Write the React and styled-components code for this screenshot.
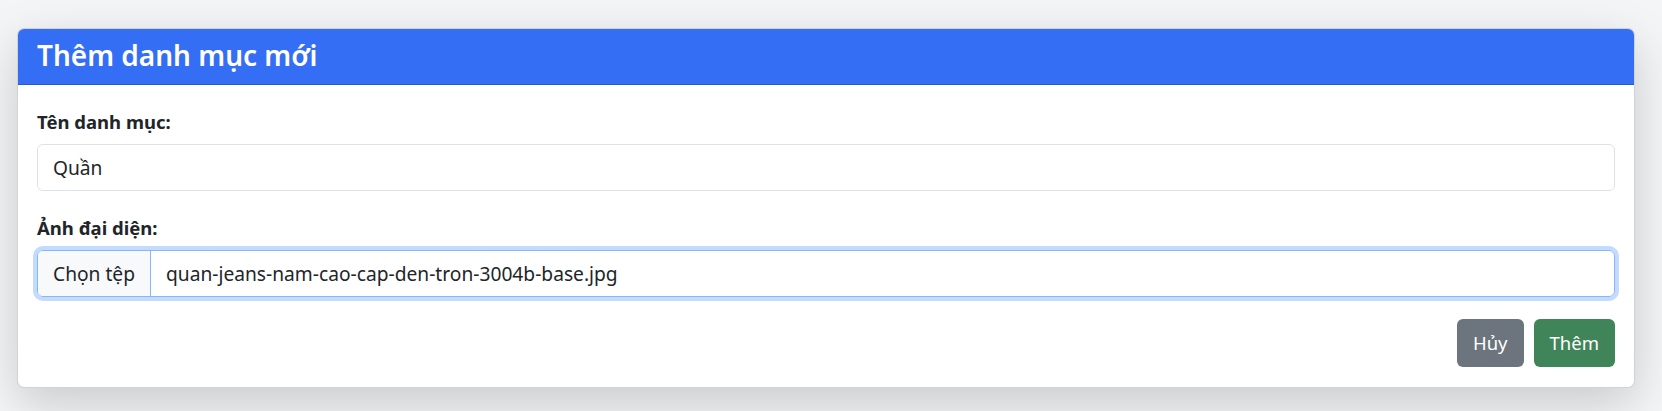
import React from 'react';
import styled, { createGlobalStyle } from 'styled-components';

const GlobalStyle = createGlobalStyle`
    body{
        margin: 0;
        background-color: #f4f5f7;
        font-family: "Noto Sans", "Open Sans", Arial, sans-serif;
        color: #212529;
    }
`

const Page = styled.div`
    padding: 28px 27px 25px 17px;
`

const Card = styled.div`
    background-color: #fff;
    border: 1px solid rgba(0,0,0,.175);
    border-radius: 7px;
    box-shadow: 0 1rem 3rem rgba(0,0,0,.175);
    overflow: hidden;
`

const CardHeader = styled.div`
    background-color: #346ef5;
    color: #fff;
    padding: 10px 19px 11px;
    border-bottom: 1px solid rgba(0,0,0,.175);
    h3{
        margin: 0;
        font-size: 28px;
        font-weight: 600;
        line-height: 1.2;
    }
`

const CardBody = styled.div`
    padding: 25px 19px 20px;
`

const Field = styled.div`
    margin-bottom: ${props => props.last ? '22px' : '25px'};
`

const Label = styled.label`
    display: block;
    font-size: 18.5px;
    font-weight: 700;
    line-height: 24px;
    margin-bottom: 10px;
`

const TextInput = styled.input`
    display: block;
    box-sizing: border-box;
    width: 100%;
    padding: 10px 15px;
    font-family: inherit;
    font-size: 19.2px;
    line-height: 25px;
    color: #212529;
    border: 1px solid #dee2e6;
    border-radius: 6px;
    outline: none;
`

const FileBox = styled.div`
    display: flex;
    align-items: stretch;
    border: 1px solid ${props => props.focused ? '#86b7fe' : '#dee2e6'};
    border-radius: 6px;
    box-shadow: ${props => props.focused ? '0 0 0 .25rem rgba(13,110,253,.25)' : 'none'};
    overflow: hidden;
    font-size: 19.2px;
    line-height: 25px;
    .pick{
        padding: 10px 15px;
        background-color: #f8f9fa;
        border-right: 1px solid ${props => props.focused ? '#86b7fe' : '#dee2e6'};
    }
    .name{
        flex: 1;
        padding: 10px 15px;
    }
`

const Actions = styled.div`
    display: flex;
    justify-content: flex-end;
    gap: 10px;
`

const Button = styled.button`
    font-family: inherit;
    font-size: 18.5px;
    line-height: 26px;
    padding: 10px 15px;
    border: 1px solid transparent;
    border-radius: 6px;
    color: #fff;
    background-color: ${props => props.variant === 'success' ? '#3f8559' : '#6c757d'};
    cursor: pointer;
`

export default function App() {
    return (
        <>
            <GlobalStyle />
            <Page>
                <Card>
                    <CardHeader>
                        <h3>Thêm danh mục mới</h3>
                    </CardHeader>
                    <CardBody>
                        <Field>
                            <Label>Tên danh mục:</Label>
                            <TextInput defaultValue="Quần" />
                        </Field>
                        <Field last>
                            <Label>Ảnh đại diện:</Label>
                            <FileBox focused>
                                <span className="pick">Chọn tệp</span>
                                <span className="name">quan-jeans-nam-cao-cap-den-tron-3004b-base.jpg</span>
                            </FileBox>
                        </Field>
                        <Actions>
                            <Button>Hủy</Button>
                            <Button variant="success">Thêm</Button>
                        </Actions>
                    </CardBody>
                </Card>
            </Page>
        </>
    );
}
